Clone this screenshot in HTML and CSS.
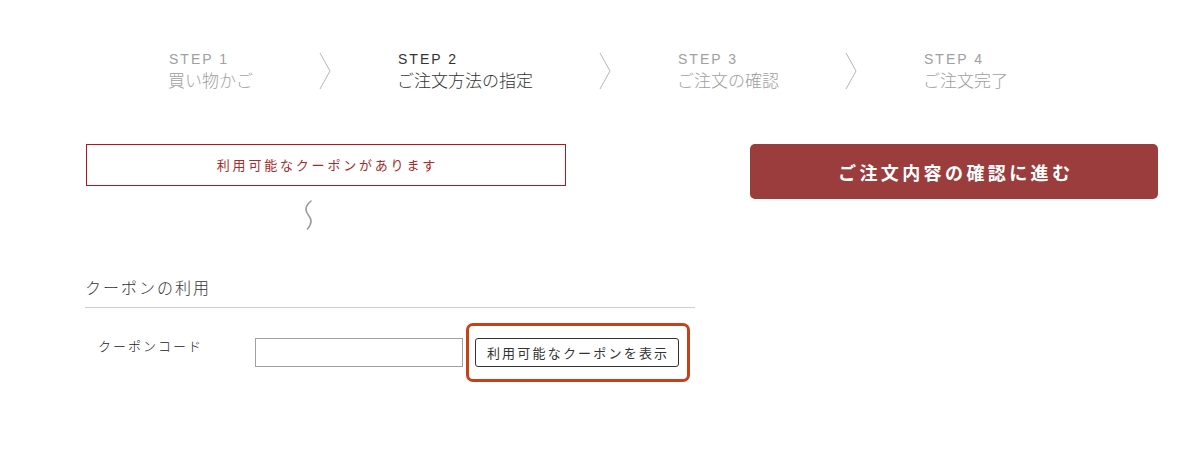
FILE: index.html
```html
<!DOCTYPE html>
<html lang="ja">
<head>
<meta charset="utf-8">
<title>ご注文方法の指定</title>
<link rel="stylesheet" href="styles.css">
</head>
<body>
<div class="steps">
  <div class="step">
    <div class="step-num">STEP 1</div>
    <div class="step-name">買い物かご</div>
  </div>
  <svg class="chev" width="12" height="38" viewBox="0 0 12 38"><path d="M1 1 L11 19 L1 37" fill="none" stroke="#b5b5b5" stroke-width="1"/></svg>
  <div class="step current">
    <div class="step-num">STEP 2</div>
    <div class="step-name">ご注文方法の指定</div>
  </div>
  <svg class="chev" width="12" height="38" viewBox="0 0 12 38"><path d="M1 1 L11 19 L1 37" fill="none" stroke="#b5b5b5" stroke-width="1"/></svg>
  <div class="step">
    <div class="step-num">STEP 3</div>
    <div class="step-name">ご注文の確認</div>
  </div>
  <svg class="chev" width="12" height="38" viewBox="0 0 12 38"><path d="M1 1 L11 19 L1 37" fill="none" stroke="#b5b5b5" stroke-width="1"/></svg>
  <div class="step">
    <div class="step-num">STEP 4</div>
    <div class="step-name">ご注文完了</div>
  </div>
</div>

<div class="main">
  <div class="left">
    <div class="notice">利用可能なクーポンがあります</div>
    <svg class="squiggle" width="12" height="30" viewBox="0 0 12 30"><path d="M8 1 C2 6 1.5 10 5 14.5 C9 19 9 24 4.5 29" fill="none" stroke="#9a9a9a" stroke-width="1.6" stroke-linecap="round"/></svg>
    <h2 class="section-title">クーポンの利用</h2>
    <div class="coupon-row">
      <div class="label">クーポンコード</div>
      <input class="code-input" type="text">
      <div class="highlight">
        <button class="show-btn" type="button">利用可能なクーポンを表示</button>
      </div>
    </div>
  </div>
  <div class="right">
    <button class="confirm-btn" type="button">ご注文内容の確認に進む</button>
  </div>
</div>
</body>
</html>
```

FILE: styles.css
```css
* { box-sizing: border-box; }
body {
  margin: 0;
  background: #fff;
  font-family: "Liberation Sans", "Noto Sans CJK JP", sans-serif;
  color: #333;
}
.steps {
  display: flex;
  align-items: center;
  padding-left: 168px;
  margin-top: 50px;
}
.step { color: #a0a0a0; }
.step.current { color: #333; }
.step-num {
  font-family: "Liberation Sans", sans-serif;
  font-size: 14px;
  line-height: 18px;
  letter-spacing: 2px;
  padding-left: 1px;
}
.step-name {
  font-family: "Noto Sans CJK JP", sans-serif;
  font-size: 17px;
  font-weight: 300;
  line-height: 24px;
  white-space: nowrap;
}
.chev { display: block; margin: 0 66px; }

.main {
  display: flex;
  padding-left: 85px;
  margin-top: 52px;
  gap: 55px;
}
.left { width: 610px; }
.notice {
  margin-left: 1px;
  width: 480px;
  height: 42px;
  border: 1px solid #b5141c;
  color: #a82a2c;
  font-family: "Noto Sans CJK JP", sans-serif;
  font-size: 13px;
  letter-spacing: 2.8px;
  text-indent: 2.8px;
  line-height: 40px;
  text-align: center;
}
.squiggle { display: block; margin: 14px 0 0 218px; }
.section-title {
  margin: 45px 0 0;
  padding-bottom: 8px;
  border-bottom: 1px solid #cfcfcf;
  font-family: "Noto Sans CJK JP", sans-serif;
  font-size: 16px;
  font-weight: 300;
  letter-spacing: 2px;
  line-height: 24px;
  color: #333;
}
.coupon-row {
  display: flex;
  align-items: center;
  margin-top: 15px;
}
.label {
  align-self: flex-start;
  width: 157px;
  margin-left: 13px;
  padding-top: 13px;
  font-family: "Noto Sans CJK JP", sans-serif;
  font-size: 13px;
  font-weight: 300;
  letter-spacing: 2px;
  line-height: 20px;
  color: #222;
}
.code-input {
  width: 208px;
  height: 29px;
  border: 1px solid #a0a0a0;
  border-radius: 0;
  padding: 0 4px;
  margin: 0;
}
.highlight {
  margin-left: 3px;
  border: 3px solid #c4421a;
  border-radius: 7px;
  padding: 12px 8px 12px 6px;
}
.show-btn {
  display: block;
  width: 204px;
  height: 29px;
  border: 1px solid #333;
  border-radius: 3px;
  background: #fff;
  color: #333;
  font-family: "Noto Sans CJK JP", sans-serif;
  font-size: 13px;
  font-weight: 400;
  letter-spacing: 2.2px;
  text-indent: 2.2px;
  padding: 0;
}
.right { width: 408px; }
.confirm-btn {
  display: block;
  width: 408px;
  height: 55px;
  border: 0;
  border-radius: 5px;
  background: #9b3d3d;
  color: #fff;
  font-family: "Noto Sans CJK JP", sans-serif;
  font-size: 18px;
  font-weight: 700;
  letter-spacing: 3.4px;
  text-indent: 3.4px;
  padding: 0;
}
```
